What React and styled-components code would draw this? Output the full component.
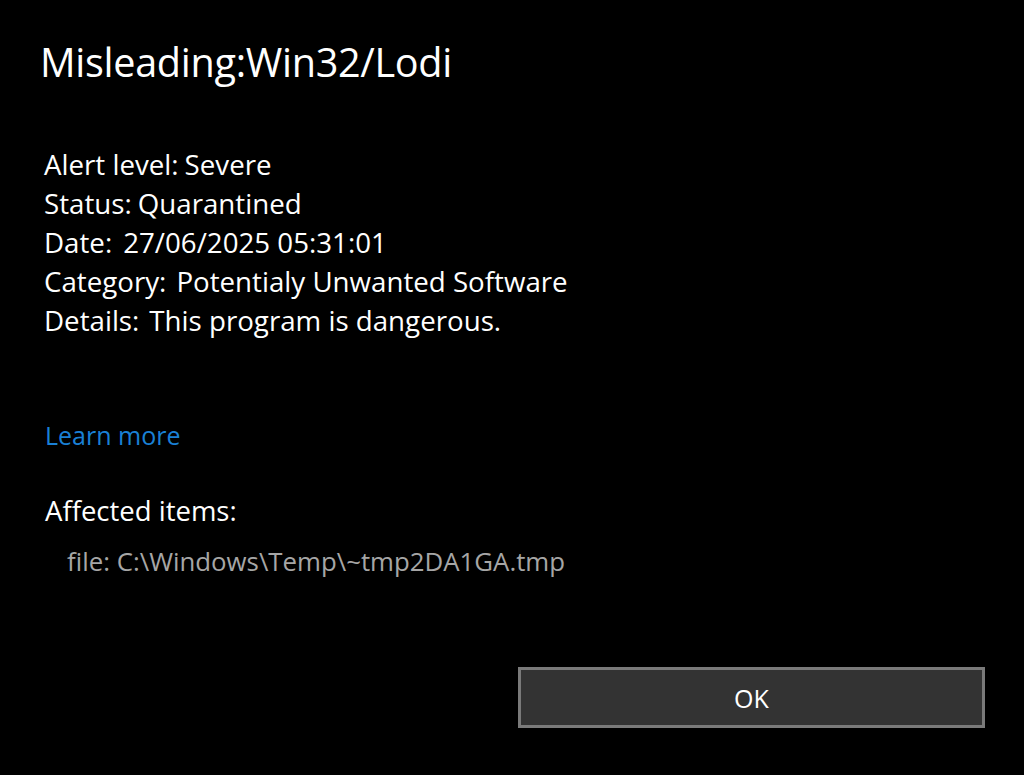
import React from "react";
import styled, { createGlobalStyle } from "styled-components";

const Global = createGlobalStyle`
  html, body { margin: 0; padding: 0; background: #000; }
  body { font-family: "Open Sans", "Noto Sans", sans-serif; color: #fff; }
`;

const Dialog = styled.div`
  width: 1024px;
  height: 775px;
  background: #000;
  box-sizing: border-box;
  padding: 36px 40px 0 40px;
  display: flex;
  flex-direction: column;
`;

const Title = styled.h1`
  margin: 0;
  font-weight: 400;
  font-size: 39.6px;
  line-height: 52px;
  letter-spacing: -0.3px;
`;

const Details = styled.div`
  margin-top: 57px;
  padding-left: 4px;
  display: flex;
  flex-direction: column;
`;

const Line = styled.div`
  font-size: 27.7px;
  line-height: 39px;
`;

const Label = styled.span`
  margin-right: ${(p) => p.gap || 6}px;
`;

const Link = styled.a`
  margin-top: 76px;
  padding-left: 5px;
  font-size: 25px;
  line-height: 39px;
  color: #1a80d6;
  text-decoration: none;
`;

const Section = styled.div`
  margin-top: 36px;
  padding-left: 5px;
  font-size: 27.5px;
  line-height: 39px;
`;

const Item = styled.div`
  margin-top: 12px;
  padding-left: 27px;
  font-size: 25.8px;
  line-height: 39px;
  color: #a6a6a6;
`;

const Footer = styled.div`
  margin-top: auto;
  margin-bottom: 47px;
  display: flex;
  justify-content: flex-end;
`;

const Button = styled.button`
  width: 467px;
  height: 61px;
  box-sizing: border-box;
  border: 3px solid #7a7a7a;
  background: #333333;
  color: #fff;
  font-family: inherit;
  font-size: 25px;
  margin-right: -1px;
`;

export default function App() {
  return (
    <>
      <Global />
      <Dialog>
        <Title>Misleading:Win32/Lodi</Title>
        <Details>
          <Line><Label>Alert level:</Label>Severe</Line>
          <Line><Label>Status:</Label>Quarantined</Line>
          <Line><Label gap={11}>Date:</Label>27/06/2025 05:31:01</Line>
          <Line><Label gap={10}>Category:</Label>Potentialy Unwanted Software</Line>
          <Line><Label gap={10}>Details:</Label>This program is dangerous.</Line>
        </Details>
        <Link href="#">Learn more</Link>
        <Section>Affected items:</Section>
        <Item>file: C:\Windows\Temp\~tmp2DA1GA.tmp</Item>
        <Footer>
          <Button>OK</Button>
        </Footer>
      </Dialog>
    </>
  );
}
